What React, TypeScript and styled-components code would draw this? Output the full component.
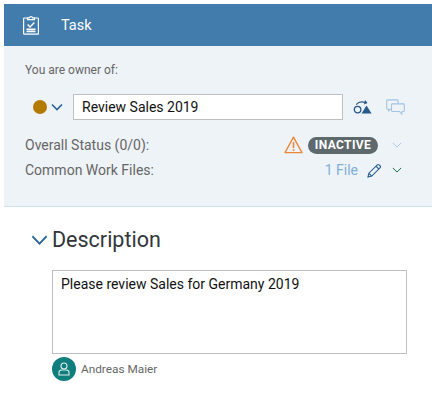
import React from "react";
import styled, { createGlobalStyle } from "styled-components";

const Global = createGlobalStyle`
  html, body { margin: 0; padding: 0; background: #fff; }
  body { font-family: Roboto, "Noto Sans", sans-serif; }
`;
const Page = styled.div`
  width: 432px; height: 410px; box-sizing: border-box; padding: 4px 0 0 4px; overflow: hidden;
`;
const Header = styled.header`
  height: 42px; background: #427cac; color: #fff; display: flex; align-items: center;
  padding-left: 19px; gap: 22px; font-size: 14.5px;
`;
const Panel = styled.section`
  height: 161px; box-sizing: border-box; background: #eef3f8; border-bottom: 1px solid #cfe2f3;
  padding: 17px 0 0 21px; display: flex; flex-direction: column;
`;
const Owner = styled.div`
  font-size: 12px; line-height: 15px; color: #666;
`;
const TitleRow = styled.div`
  display: flex; align-items: center; margin-top: 16px; height: 26px;
`;
const Dot = styled.span`
  width: 14px; height: 14px; border-radius: 50%; background: #b37b00; margin-left: 8px;
`;
const TitleInput = styled.div`
  width: 270px; height: 26px; box-sizing: border-box; margin-left: 10px; background: #fff;
  border: 1px solid #bfbfbf; padding-left: 8px; font-size: 14px; line-height: 24px; color: #111;
`;
const ChevronBtn = styled.span`
  display: flex; margin-left: 4px;
`;
const IconSlot = styled.span<{ $gap: number }>`
  display: flex; margin-left: ${(p) => p.$gap}px;
`;
const InfoRow = styled.div<{ $top: number }>`
  display: flex; align-items: center; height: 22px; margin-top: ${(p) => p.$top}px;
  font-size: 14px; color: #666; padding-right: 30px;
`;
const Label = styled.span`
  flex: 1;
`;
const Badge = styled.span`
  display: inline-flex; align-items: center; justify-content: center; width: 70px; height: 17px; border-radius: 9px;
  background: #5e696e; color: #fff; font-size: 12px; font-weight: 700; letter-spacing: 0.4px; margin-left: 5px;
`;
const FileLink = styled.span`
  color: #7fb0d8; font-size: 14px;
`;
const Section = styled.section`
  padding: 17px 0 0 27px;
`;
const SectionTitle = styled.h2`
  display: flex; align-items: center; gap: 4px; margin: 0; font-size: 21.5px; font-weight: 400; line-height: 32px; color: #32363a;
`;
const Description = styled.div`
  width: 355px; height: 84px; box-sizing: border-box; margin: 14px 0 0 21px; border: 1px solid #bfbfbf;
  padding: 4px 8px; font-size: 14px; line-height: 19px; color: #111; background: #fff;
`;
const Author = styled.div`
  display: flex; align-items: center; gap: 5px; margin: 3px 0 0 21px; font-size: 11.8px; color: #666;
`;
const Avatar = styled.span`
  width: 24px; height: 24px; border-radius: 50%; background: #107e7d; display: flex; align-items: center; justify-content: center;
`;

const Chevron = ({ size, w, color, sw = 1.4 }: { size: number; w?: number; color: string; sw?: number }) => (
  <svg width={w ?? size} height={size} viewBox="0 0 12 12" fill="none" preserveAspectRatio="none">
    <path d="M1 3.5 L6 8.5 L11 3.5" stroke={color} strokeWidth={sw} />
  </svg>
);

export default function App() {
  return (
    <Page>
      <Global />
      <Header>
        <svg width="16" height="20" viewBox="0 0 16 20" fill="none" stroke="#fff" strokeWidth="1.2">
          <path d="M4.5 3H1.2a.6.6 0 0 0-.6.6v15a.6.6 0 0 0 .6.6h13.6a.6.6 0 0 0 .6-.6v-15a.6.6 0 0 0-.6-.6H11.5" />
          <path d="M4.5 4.6V2.8h1.8a1.8 1.8 0 0 1 3.4 0h1.8v1.8z" />
          <path d="M4.6 9.6l2.4 2.4 4.4-4.6" strokeWidth="1.4" />
          <path d="M3.5 14.2h9M3.5 16.4h9" strokeWidth="1.6" />
        </svg>
        <span>Task</span>
      </Header>
      <Panel>
        <Owner>You are owner of:</Owner>
        <TitleRow>
          <Dot />
          <ChevronBtn><Chevron size={12} color="#2a6196" sw={1.6} /></ChevronBtn>
          <TitleInput>Review Sales 2019</TitleInput>
          <IconSlot $gap={10}>
            <svg width="19" height="15" viewBox="0 0 19 15" fill="none">
              <circle cx="4.6" cy="9.6" r="3.3" stroke="#27598a" strokeWidth="1.3" />
              <path d="M13.5 5.5 18.6 13.6H8.6z" fill="#27598a" />
              <path d="M3.2 4.6C5.5 1.8 9 1.4 12.4 2.6" stroke="#27598a" strokeWidth="1.2" />
              <path d="M12 0 14.6 3 11 4.6z" fill="#27598a" />
            </svg>
          </IconSlot>
          <IconSlot $gap={14}>
            <svg width="19" height="16" viewBox="0 0 21 18" fill="none" stroke="#9fc3e2" strokeWidth="1.2">
              <path d="M5.5 11.5H4L3 13.5 2.5 11.5H1.6a1 1 0 0 1-1-1V2a1 1 0 0 1 1-1h10.8a1 1 0 0 1 1 1v3.5" />
              <path d="M7 5.5h12.4a1 1 0 0 1 1 1V13a1 1 0 0 1-1 1H18l-.5 3-2.5-3H7a1 1 0 0 1-1-1V6.5a1 1 0 0 1 1-1z" />
            </svg>
          </IconSlot>
        </TitleRow>
        <InfoRow $top={14}>
          <Label>Overall Status (0/0):</Label>
          <svg width="19" height="18" viewBox="0 0 19 18" fill="none">
            <path d="M9.5 1.2 18 16.6H1z" stroke="#e9893a" strokeWidth="1.4" strokeLinejoin="round" />
            <path d="M9.5 6v6M9.5 13.2v1.8" stroke="#e9893a" strokeWidth="1.6" />
          </svg>
          <Badge>INACTIVE</Badge>
          <IconSlot $gap={14}><Chevron size={10} color="#a9c7e2" sw={1.2} /></IconSlot>
        </InfoRow>
        <InfoRow $top={3}>
          <Label>Common Work Files:</Label>
          <FileLink>1 File</FileLink>
          <IconSlot $gap={9}>
            <svg width="15" height="15" viewBox="0 0 15 15" fill="none" stroke="#2a5f8f" strokeWidth="1.1">
              <path d="M1 14l.9-3.8 8.4-8.4a1.2 1.2 0 0 1 1.7 0l1.2 1.2a1.2 1.2 0 0 1 0 1.7l-8.4 8.4z" />
              <path d="M9 3.2l2.8 2.8M2 10.4l2.6 2.6" />
            </svg>
          </IconSlot>
          <IconSlot $gap={10}><Chevron size={10} color="#1d6b45" sw={1.2} /></IconSlot>
        </InfoRow>
      </Panel>
      <Section>
        <SectionTitle><Chevron size={18} w={17} color="#2a6196" sw={1.2} />Description</SectionTitle>
        <Description>Please review Sales for Germany 2019</Description>
        <Author>
          <Avatar>
            <svg width="12" height="14" viewBox="0 0 12 14" fill="none" stroke="#fff" strokeWidth="1.1" opacity="0.85">
              <circle cx="6" cy="4" r="3" />
              <path d="M1 13v-2.5a2.5 2.5 0 0 1 2.5-2.5h5a2.5 2.5 0 0 1 2.5 2.5V13z" />
            </svg>
          </Avatar>
          Andreas Maier
        </Author>
      </Section>
    </Page>
  );
}
